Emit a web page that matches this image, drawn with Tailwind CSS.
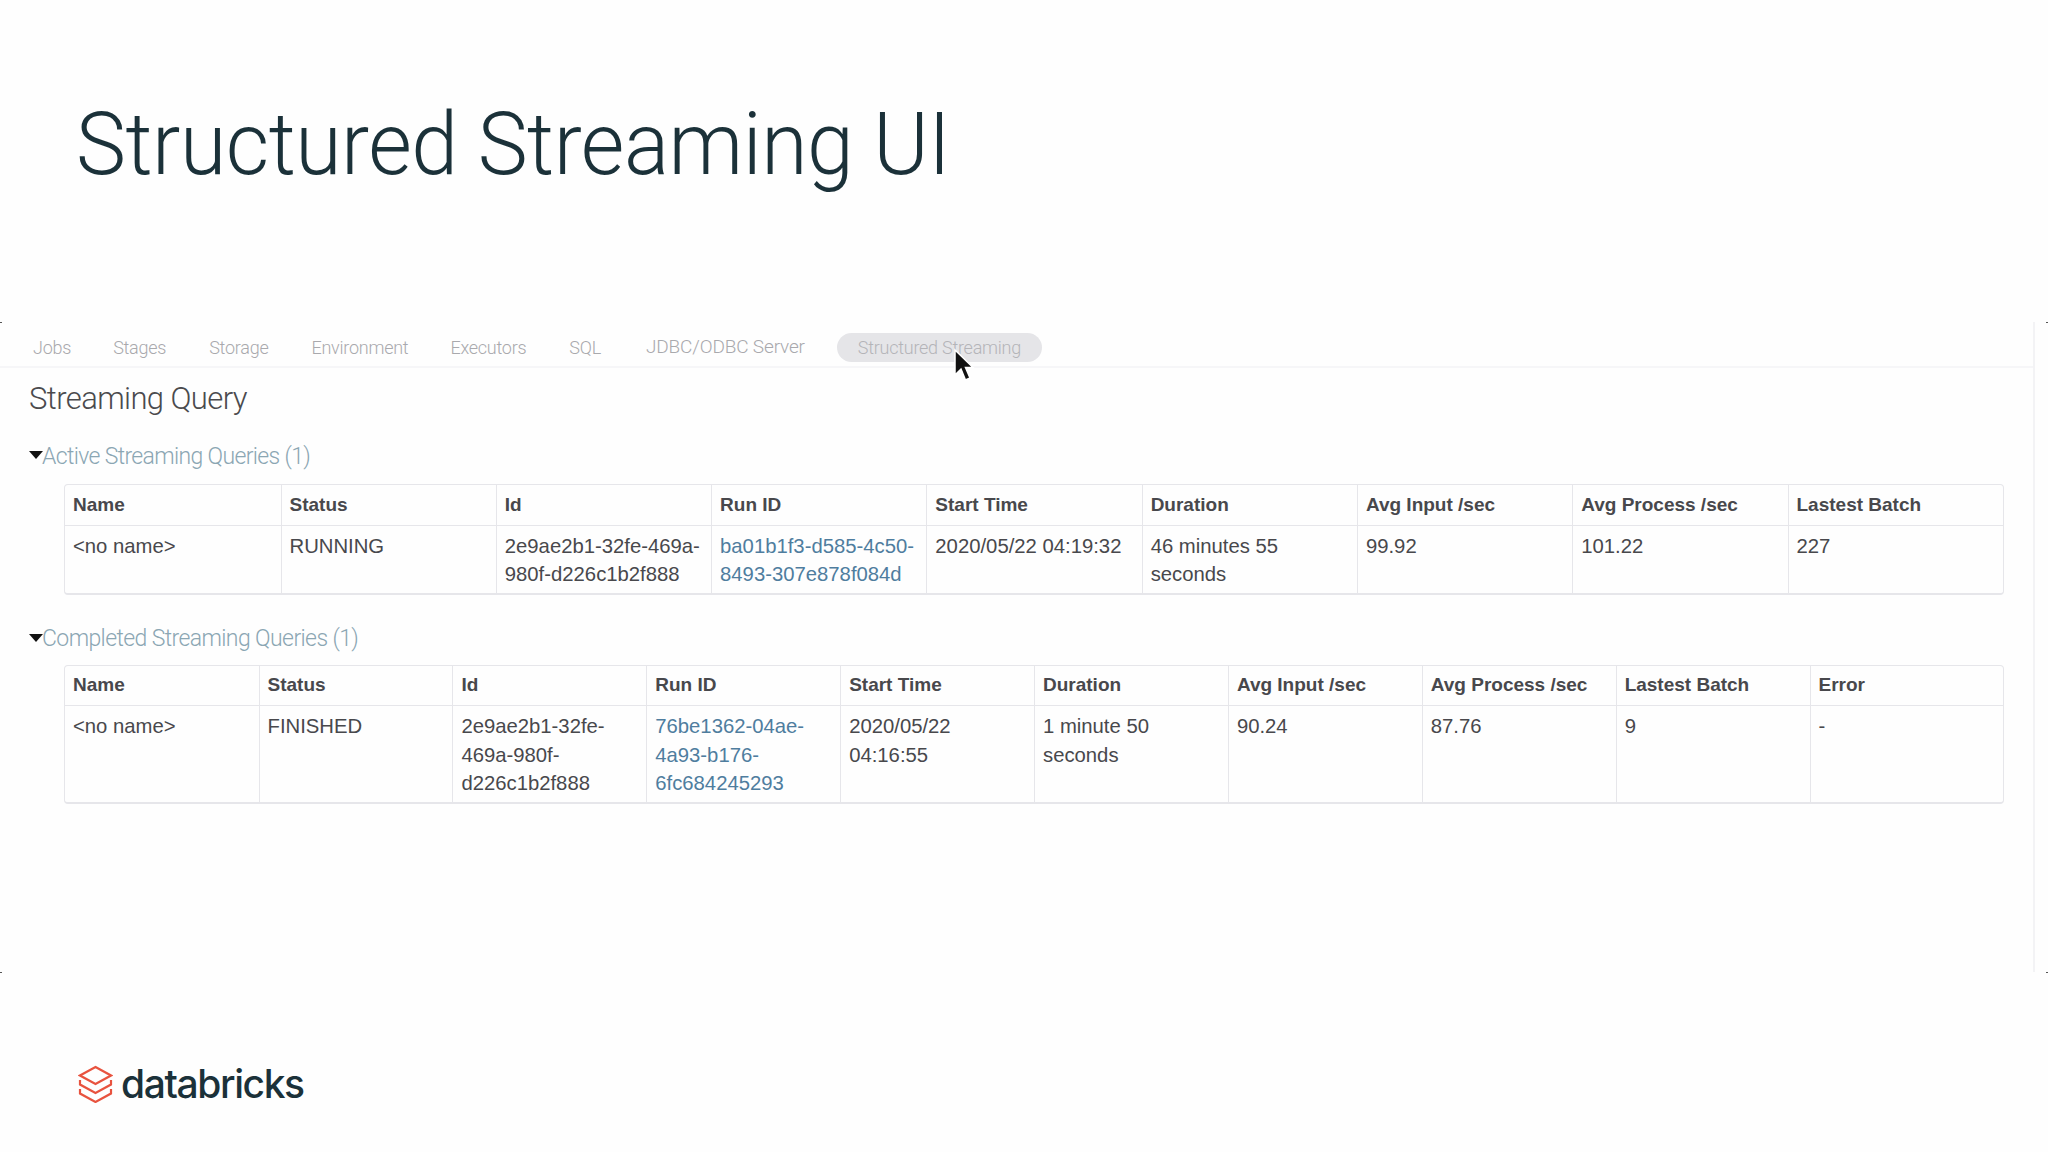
<!DOCTYPE html>
<html lang="en">
<head>
  <meta charset="UTF-8" />
  <title>Structured Streaming UI</title>
  <script src="https://cdn.jsdelivr.net/npm/@tailwindcss/browser@4"></script>
</head>
<body class="bg-[#fefefe] w-[2048px] h-[1152px] overflow-hidden relative font-['Liberation_Sans',sans-serif] text-[#48484c]">

  <!-- Slide title -->
  <h1 class="pl-[76px] pt-[94px] h-[322px] text-[#1b3139] text-[88px] leading-[100px] font-light font-['Roboto',sans-serif] tracking-[-0.5px]"><span class="inline-block origin-left scale-x-[0.957]">Structured Streaming UI</span></h1>

  <!-- Spark UI capture -->
  <div class="h-[650px] w-[2035px] border-r-2 border-[#f3f3f5]">
    <nav class="h-[46px] pt-[7px] border-b-2 border-[#f6f6f8] flex items-center text-[18px] font-light font-['Roboto',sans-serif] text-[#a9a9ad] tracking-[-0.25px]">
      <a class="ml-[33px]">Jobs</a>
      <a class="ml-[42px]">Stages</a>
      <a class="ml-[43px]">Storage</a>
      <a class="ml-[43px]">Environment</a>
      <a class="ml-[42px]">Executors</a>
      <a class="ml-[43px]">SQL</a>
      <a class="ml-[45px] text-[19px] tracking-[-0.15px]">JDBC/ODBC Server</a>
      <a class="ml-[32px] h-[29px] w-[205px] rounded-full bg-[#e5e5e8] text-[#b4b4b8] flex items-center justify-center">Structured Streaming</a>
    </nav>

    <div class="pl-[29px]">
      <h2 class="pt-[11px] h-[55px] text-[31px] leading-[40px] font-light font-['Roboto',sans-serif] text-[#4a4a4d] tracking-[-0.6px]">Streaming Query</h2>

      <!-- Active queries -->
      <div class="mt-[18px] flex h-[32px] items-center text-[23px] font-light font-['Roboto',sans-serif] text-[#8ba6b3] tracking-[-0.65px]">
        <svg class="w-[14px] h-[32px] shrink-0" viewBox="0 0 14 32"><path d="M0 10h14l-7 8z" fill="#111" /></svg>
        <span class="-ml-[1px]">Active Streaming Queries (1)</span>
      </div>
      <div class="mt-[11px] ml-[35px] w-[1940px] border border-[#e6e6ea] border-b-2 rounded-[4px] overflow-hidden">
        <table class="w-full table-fixed text-[20.3px] leading-[28.5px]">
          <thead class="text-left text-[19px]">
            <tr class="h-[40px] border-b border-[#e6e6ea]">
              <th class="w-[216px] px-2 font-bold">Name</th>
              <th class="px-2 font-bold border-l border-[#e6e6ea]">Status</th>
              <th class="px-2 font-bold border-l border-[#e6e6ea]">Id</th>
              <th class="px-2 font-bold border-l border-[#e6e6ea]">Run ID</th>
              <th class="px-2 font-bold border-l border-[#e6e6ea]">Start Time</th>
              <th class="px-2 font-bold border-l border-[#e6e6ea]">Duration</th>
              <th class="px-2 font-bold border-l border-[#e6e6ea]">Avg Input /sec</th>
              <th class="px-2 font-bold border-l border-[#e6e6ea]">Avg Process /sec</th>
              <th class="w-[215px] px-2 font-bold border-l border-[#e6e6ea]">Lastest Batch</th>
            </tr>
          </thead>
          <tbody>
            <tr class="align-top">
              <td class="px-2 pt-[6px] pb-[4px]">&lt;no name&gt;</td>
              <td class="px-2 pt-[6px] pb-[4px] border-l border-[#e6e6ea]">RUNNING</td>
              <td class="px-2 pt-[6px] pb-[4px] border-l border-[#e6e6ea]">2e9ae2b1-32fe-469a-<br />980f-d226c1b2f888</td>
              <td class="px-2 pt-[6px] pb-[4px] border-l border-[#e6e6ea] text-[#4f7d9e]">ba01b1f3-d585-4c50-<br />8493-307e878f084d</td>
              <td class="px-2 pt-[6px] pb-[4px] border-l border-[#e6e6ea] whitespace-nowrap">2020/05/22 04:19:32</td>
              <td class="px-2 pt-[6px] pb-[4px] border-l border-[#e6e6ea]">46 minutes 55<br />seconds</td>
              <td class="px-2 pt-[6px] pb-[4px] border-l border-[#e6e6ea]">99.92</td>
              <td class="px-2 pt-[6px] pb-[4px] border-l border-[#e6e6ea]">101.22</td>
              <td class="px-2 pt-[6px] pb-[4px] border-l border-[#e6e6ea]">227</td>
            </tr>
          </tbody>
        </table>
      </div>

      <!-- Completed queries -->
      <div class="mt-[29px] flex h-[32px] items-center text-[23px] font-light font-['Roboto',sans-serif] text-[#8ba6b3] tracking-[-0.6px]">
        <svg class="w-[14px] h-[32px] shrink-0" viewBox="0 0 14 32"><path d="M0 10h14l-7 8z" fill="#111" /></svg>
        <span class="-ml-[1px]">Completed Streaming Queries (1)</span>
      </div>
      <div class="mt-[9px] ml-[35px] w-[1940px] border border-[#e6e6ea] border-b-2 rounded-[4px] overflow-hidden">
        <table class="w-full table-fixed text-[20.3px] leading-[28.5px]">
          <thead class="text-left text-[19px]">
            <tr class="h-[40px] border-b border-[#e6e6ea]">
              <th class="w-[194px] px-2 font-bold">Name</th>
              <th class="px-2 font-bold border-l border-[#e6e6ea]">Status</th>
              <th class="px-2 font-bold border-l border-[#e6e6ea]">Id</th>
              <th class="px-2 font-bold border-l border-[#e6e6ea]">Run ID</th>
              <th class="px-2 font-bold border-l border-[#e6e6ea]">Start Time</th>
              <th class="px-2 font-bold border-l border-[#e6e6ea]">Duration</th>
              <th class="px-2 font-bold border-l border-[#e6e6ea]">Avg Input /sec</th>
              <th class="px-2 font-bold border-l border-[#e6e6ea]">Avg Process /sec</th>
              <th class="px-2 font-bold border-l border-[#e6e6ea]">Lastest Batch</th>
              <th class="w-[193px] px-2 font-bold border-l border-[#e6e6ea]">Error</th>
            </tr>
          </thead>
          <tbody>
            <tr class="align-top">
              <td class="px-2 pt-[6px] pb-[4px]">&lt;no name&gt;</td>
              <td class="px-2 pt-[6px] pb-[4px] border-l border-[#e6e6ea]">FINISHED</td>
              <td class="px-2 pt-[6px] pb-[4px] border-l border-[#e6e6ea]">2e9ae2b1-32fe-<br />469a-980f-<br />d226c1b2f888</td>
              <td class="px-2 pt-[6px] pb-[4px] border-l border-[#e6e6ea] text-[#4f7d9e]">76be1362-04ae-<br />4a93-b176-<br />6fc684245293</td>
              <td class="px-2 pt-[6px] pb-[4px] border-l border-[#e6e6ea]">2020/05/22<br />04:16:55</td>
              <td class="px-2 pt-[6px] pb-[4px] border-l border-[#e6e6ea]">1 minute 50<br />seconds</td>
              <td class="px-2 pt-[6px] pb-[4px] border-l border-[#e6e6ea]">90.24</td>
              <td class="px-2 pt-[6px] pb-[4px] border-l border-[#e6e6ea]">87.76</td>
              <td class="px-2 pt-[6px] pb-[4px] border-l border-[#e6e6ea]">9</td>
              <td class="px-2 pt-[6px] pb-[4px] border-l border-[#e6e6ea]">-</td>
            </tr>
          </tbody>
        </table>
      </div>
    </div>
  </div>

  <!-- Footer logo -->
  <div class="mt-[90px] pl-[78px] flex items-center gap-[8px]">
    <svg class="w-[35px] h-[38px]" viewBox="0 0 35 38" fill="none" stroke="#e8533f" stroke-width="2.200">
      <path d="M17.500 2 33 10.500 17.500 19 2 10.500z" />
      <path d="M2 15v4.500L17.500 28 33 19.500V15" />
      <path d="M2 24v4.500L17.500 37 33 28.500V24" />
    </svg>
    <span class="text-[#1b3139] text-[39px] leading-[44px] font-medium font-['Inter',sans-serif] tracking-[-1.4px]">databricks</span>
  </div>

  <!-- Capture corner ticks -->
  <div class="absolute left-0 top-[322px] w-[2px] h-[1px] bg-[#555]"></div>
  <div class="absolute right-0 top-[322px] w-[2px] h-[1px] bg-[#555]"></div>
  <div class="absolute left-0 top-[972px] w-[2px] h-[1px] bg-[#555]"></div>
  <div class="absolute right-0 top-[972px] w-[2px] h-[1px] bg-[#555]"></div>

  <!-- Mouse cursor -->
  <svg class="absolute left-[952px] top-[348px] w-[24px] h-[36px]" viewBox="0 0 24 36">
    <path d="M3 2v25l6-6 4.500 11 4.500-2-4.500-10.500H21z" fill="#111" stroke="#fff" stroke-width="1.500" />
  </svg>
</body>
</html>
